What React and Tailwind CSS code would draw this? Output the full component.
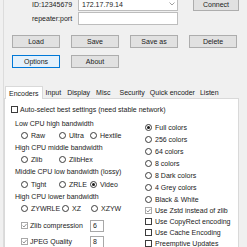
import React from "react";

const Radio = ({ checked }) => (
  <span className="w-[7px] h-[7px] rounded-full border border-[#3c3c3c] bg-white flex items-center justify-center shrink-0">
    {checked && <span className="w-[3px] h-[3px] rounded-full bg-[#1a1a1a]" />}
  </span>
);

const Check = ({ checked, disabled }) => (
  <span
    className={
      disabled
        ? "w-[7px] h-[7px] border border-[#a8a8a8] bg-white flex items-center justify-center shrink-0"
        : "w-[7px] h-[7px] border border-[#3c3c3c] bg-white flex items-center justify-center shrink-0"
    }
  >
    {checked && (
      <svg width="5" height="5" viewBox="0 0 5 5">
        <path d="M0.6 2.6 L2 4 L4.5 1" stroke="#8a8a8a" fill="none" strokeWidth="0.9" />
      </svg>
    )}
  </span>
);

const R = ({ label, checked, w }) => (
  <div className={`flex items-center gap-[3px] ${w || ""}`}>
    <Radio checked={checked} />
    <span>{label}</span>
  </div>
);

const Btn = ({ children, focus }) => (
  <div
    className={
      focus
        ? "w-[48px] h-[13px] flex items-center justify-center border border-[#0078d7] bg-[#e5f1fb]"
        : "w-[48px] h-[13px] flex items-center justify-center border border-[#adadad] bg-[#e1e1e1]"
    }
  >
    {children}
  </div>
);

export default function App() {
  return (
    <div
      className="w-[247px] h-[247px] overflow-hidden bg-[#f0f0f0] text-[7px] leading-none text-[#1a1a1a] pl-[3px]"
      style={{ fontFamily: '"Liberation Sans", Arial, sans-serif' }}
    >
      <div className="h-full flex flex-col border-l border-[#dcdcdc]">
        <div className="flex flex-col mt-[-3px]">
          {/* row 1 */}
          <div className="flex items-center h-[14px]">
            <span className="w-[74px] pl-[28px]">ID:12345679</span>
            <div className="w-[100px] h-[13px] border border-[#bdbdbd] bg-white flex items-center pl-[3px] justify-between">
              <span>172.17.79.14</span>
              <svg width="6" height="4" viewBox="0 0 6 4" className="mr-[2px]">
                <path d="M0.5 0.5 L3 3 L5.5 0.5" stroke="#888" fill="none" strokeWidth="0.8" />
              </svg>
            </div>
            <div className="ml-[15px] w-[46px] h-[14px] border border-[#adadad] bg-[#e1e1e1] flex items-center justify-center">
              Connect
            </div>
          </div>
          {/* row 2 */}
          <div className="flex items-center h-[13px] mt-[1px]">
            <span className="w-[74px] pl-[28px]">repeater:port</span>
            <div className="w-[100px] h-[13px] border border-[#bdbdbd] bg-white" />
          </div>
          {/* row 3 */}
          <div className="flex items-center gap-[11px] pl-[8px] mt-[10px]">
            <Btn>Load</Btn>
            <Btn>Save</Btn>
            <Btn>Save as</Btn>
            <Btn>Delete</Btn>
          </div>
          {/* row 4 */}
          <div className="flex items-center gap-[11px] pl-[8px] mt-[7px]">
            <Btn focus>Options</Btn>
            <Btn>About</Btn>
          </div>

          {/* tabs */}
          <div className="flex items-end h-[13px] mt-[17px] pl-[1px]">
            <div className="h-[13px] px-[3px] bg-white border border-b-0 border-[#d9d9d9] flex items-center relative z-10 mb-[-1px]">
              Encoders
            </div>
            <div className="flex items-center h-[12px] pl-[3px]">
              <span>Input</span>
              <span className="ml-[6px]">Display</span>
              <span className="ml-[6px]">Misc</span>
              <span className="ml-[9px]">Security</span>
              <span className="ml-[5px]">Quick encoder</span>
              <span className="ml-[5px]">Listen</span>
            </div>
          </div>
          {/* panel */}
          <div className="w-[235px] h-[160px] bg-white border border-[#d9d9d9] flex flex-col">
            <div className="flex items-center gap-[2px] pl-[6px] h-[12px] mt-[4px]">
              <Check />
              <span>Auto-select best settings (need stable network)</span>
            </div>
            <div className="flex">
              {/* left column */}
              <div className="w-[140px] flex flex-col">
                <div className="h-[12px] flex items-center pl-[10px] mt-[2px]">Low CPU high bandwidth</div>
                <div className="h-[12px] flex items-center pl-[16px]">
                  <R label="Raw" w="w-[38px]" />
                  <R label="Ultra" w="w-[31px]" />
                  <R label="Hextile" />
                </div>
                <div className="h-[12px] flex items-center pl-[10px]">High CPU middle bandwidth</div>
                <div className="h-[12px] flex items-center pl-[16px]">
                  <R label="Zlib" w="w-[38px]" />
                  <R label="ZlibHex" />
                </div>
                <div className="h-[13px] flex items-center pl-[10px]">Middle CPU low bandwidth (lossy)</div>
                <div className="h-[12px] flex items-center pl-[16px]">
                  <R label="Tight" w="w-[38px]" />
                  <R label="ZRLE" w="w-[31px]" />
                  <R label="Video" checked />
                </div>
                <div className="h-[12px] flex items-center pl-[10px]">High CPU lower bandwidth</div>
                <div className="h-[13px] flex items-center pl-[16px]">
                  <R label="ZYWRLE" w="w-[41px]" />
                  <R label="XZ" w="w-[29px]" />
                  <R label="XZYW" />
                </div>
                <div className="h-[13px] flex items-center pl-[16px] mt-[4px]">
                  <div className="w-[69px] flex items-center gap-[2px]">
                    <Check checked disabled />
                    <span>Zlib compression</span>
                  </div>
                  <div className="w-[14px] h-[12px] border border-[#a8a8a8] bg-white flex items-center pl-[2px]">6</div>
                </div>
                <div className="h-[13px] flex items-center pl-[16px] mt-[3px]">
                  <div className="w-[69px] flex items-center gap-[2px]">
                    <Check checked disabled />
                    <span>JPEG Quality</span>
                  </div>
                  <div className="w-[14px] h-[12px] border border-[#a8a8a8] bg-white flex items-center pl-[2px]">8</div>
                </div>
              </div>
              {/* right column */}
              <div className="flex flex-col pt-[6px]">
                <div className="h-[12px] flex items-center"><R label="Full colors" checked /></div>
                <div className="h-[12px] flex items-center"><R label="256 colors" /></div>
                <div className="h-[12px] flex items-center"><R label="64 colors" /></div>
                <div className="h-[12px] flex items-center"><R label="8 colors" /></div>
                <div className="h-[12px] flex items-center"><R label="8 Dark colors" /></div>
                <div className="h-[12px] flex items-center"><R label="4 Grey colors" /></div>
                <div className="h-[12px] flex items-center"><R label="Black & White" /></div>
                <div className="h-[11px] flex items-center gap-[3px]"><Check checked disabled /><span>Use Zstd instead of zlib</span></div>
                <div className="h-[11px] flex items-center gap-[3px]"><Check /><span>Use CopyRect encoding</span></div>
                <div className="h-[11px] flex items-center gap-[3px]"><Check /><span>Use Cache Encoding</span></div>
                <div className="h-[11px] flex items-center gap-[3px]"><Check /><span>Preemptive Updates</span></div>
              </div>
            </div>
          </div>
        </div>
      </div>
    </div>
  );
}
